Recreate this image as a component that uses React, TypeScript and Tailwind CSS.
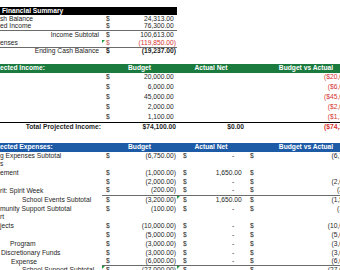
import React from "react";

type Amt = {
  v?: string;
  d?: boolean;
  bold?: boolean;
  red?: boolean;
  dRed?: boolean;
  tri?: boolean;
};

const COL_B = "w-[75px] pl-[4px] pr-[1px]";
const COL_C = "w-[68px] pl-[6px] pr-[1px]";
const COL_D = "w-[122px] pl-[5px] pr-[5px]";

function Tri() {
  return (
    <span className="absolute left-0 top-0 w-0 h-0 border-t-[3px] border-r-[3px] border-t-[#1f9a3c] border-r-transparent" />
  );
}

function Value({ v }: { v: string }) {
  if (v === "-") {
    return (
      <span>
        -<span className="invisible">00)</span>
      </span>
    );
  }
  if (v.endsWith(")") || v.startsWith("$")) return <span>{v}</span>;
  return (
    <span>
      {v}
      <span className="invisible">)</span>
    </span>
  );
}

function AmtCell({ col, a, line }: { col: string; a?: Amt; line?: boolean }) {
  return (
    <div
      className={`relative h-full flex items-center justify-between shrink-0 ${col} ${
        line ? "border-b border-[#6b6b6b]" : ""
      }`}
    >
      {a?.tri && <Tri />}
      <span className={`${a?.dRed || a?.red ? "text-[#c0504d]" : ""} ${a?.bold ? "font-bold" : ""}`}>
        {a?.d ? "$" : ""}
      </span>
      {a?.v && (
        <span className={`${a.red ? "text-[#d3312f]" : ""} ${a.bold ? "font-bold" : ""}`}>
          <Value v={a.v} />
        </span>
      )}
    </div>
  );
}

function Row({
  h,
  label,
  lc = "",
  b,
  c,
  d,
  sumLine,
  expLine,
}: {
  h: string;
  label?: string;
  lc?: string;
  b?: Amt;
  c?: Amt;
  d?: Amt;
  sumLine?: boolean;
  expLine?: boolean;
}) {
  return (
    <div className={`flex ${h}`}>
      <div
        className={`w-[102px] shrink-0 h-full flex items-center whitespace-nowrap overflow-hidden ${lc} ${
          sumLine ? "border-b border-[#6b6b6b]" : ""
        }`}
      >
        {label}
      </div>
      <AmtCell col={COL_B} a={b} line={sumLine || expLine} />
      <AmtCell col={COL_C} a={c} line={expLine} />
      <AmtCell col={COL_D} a={d} line={expLine} />
    </div>
  );
}

function Header({ label, bg, h }: { label: string; bg: string; h: string }) {
  return (
    <div className={`flex ${h} ${bg} text-white font-bold items-center`}>
      <div className="w-[102px] shrink-0 whitespace-nowrap">{label}</div>
      <div className="w-[75px] shrink-0 text-center">Budget</div>
      <div className="w-[68px] shrink-0 text-center">Actual Net</div>
      <div className="w-[122px] shrink-0 text-center">Budget vs Actual</div>
    </div>
  );
}

const dash: Amt = { d: true, v: "-" };

export default function App() {
  return (
    <div className="w-[340px] h-[270px] overflow-hidden bg-white">
      <div className="w-[367px] text-[6.7px] leading-none text-[#1e1e1e] font-['Liberation_Sans',Arial,sans-serif]">
        {/* financial summary */}
        <div className="h-[7px]" />
        <div className="flex h-[8px] items-center">
          <div className="w-[177px] h-full bg-black text-white font-bold flex items-center pl-[2px]">
            Financial Summary
          </div>
        </div>
        <Row h="h-[8.2px]" label="sh Balance" b={{ d: true, v: "24,313.00" }} />
        <Row h="h-[8.2px]" label="ed Income" b={{ d: true, v: "76,300.00" }} sumLine />
        <Row h="h-[8.2px]" label="Income Subtotal" lc="justify-end pr-[3px]" b={{ d: true, v: "100,613.00" }} />
        <Row
          h="h-[8.2px]"
          label="enses"
          b={{ d: true, v: "(119,850.00)", red: true, tri: true }}
          sumLine
        />
        <Row
          h="h-[8.2px]"
          label="Ending Cash Balance"
          lc="justify-end pr-[3px]"
          b={{ d: true, v: "(19,237.00)", bold: true }}
        />
        <div className="h-[8px]" />

        {/* projected income */}
        <Header label="ected Income:" bg="bg-[#1b7b3f]" h="h-[9px]" />
        <Row h="h-[9.8px]" b={{ d: true, v: "20,000.00" }} d={{ v: "($20,000.00)", red: true }} />
        <Row h="h-[9.8px]" b={{ d: true, v: "6,000.00" }} d={{ v: "($6,000.00)", red: true }} />
        <Row h="h-[9.8px]" b={{ d: true, v: "45,000.00" }} d={{ v: "($45,000.00)", red: true }} />
        <Row h="h-[9.8px]" b={{ d: true, v: "2,000.00" }} d={{ v: "($2,000.00)", red: true }} />
        <Row h="h-[9.8px]" b={{ d: true, v: "1,100.00" }} d={{ v: "($1,100.00)", red: true }} />
        <div className="h-[1.5px] bg-black" />
        <Row
          h="h-[8.8px]"
          label="Total Projected Income:"
          lc="justify-end pr-[1px] font-bold"
          b={{ v: "$74,100.00", bold: true }}
          c={{ v: "$0.00", bold: true }}
          d={{ v: "($74,100.00)", bold: true, red: true }}
        />
        <div className="h-[10.5px]" />

        {/* projected expenses */}
        <Header label="ected Expenses:" bg="bg-[#1e5ba7]" h="h-[8.8px]" />
        <Row
          h="h-[8.83px]"
          label="g Expenses Subtotal"
          b={{ d: true, v: "(6,750.00)" }}
          c={dash}
          d={{ d: true, v: "(6,750.00)" }}
        />
        <Row h="h-[8.83px]" label="s" />
        <Row
          h="h-[8.83px]"
          label="ement"
          b={{ d: true, v: "(1,000.00)" }}
          c={{ d: true, v: "1,650.00" }}
          d={{ d: true }}
        />
        <Row h="h-[8.83px]" b={{ d: true, v: "(2,000.00)" }} c={dash} d={{ d: true, v: "(2,000.00)" }} />
        <Row
          h="h-[8.83px]"
          label="rit: Spirit Week"
          b={{ d: true, v: "(200.00)" }}
          c={dash}
          d={{ d: true, v: "(200.00)" }}
          expLine
        />
        <Row
          h="h-[8.83px]"
          label="School Events Subtotal"
          lc="pl-[22px]"
          b={{ d: true, v: "(3,200.00)" }}
          c={{ d: true, v: "1,650.00", tri: true }}
          d={{ d: true, v: "(1,550.00)" }}
        />
        <Row
          h="h-[8.83px]"
          label="munity Support Subtotal"
          b={{ d: true, v: "(100.00)" }}
          c={dash}
          d={{ d: true, v: "(100.00)" }}
        />
        <Row h="h-[8.83px]" label="rt" />
        <Row h="h-[8.83px]" label="jects" b={{ d: true, v: "(10,000.00)" }} c={dash} d={{ d: true, v: "(10,000.00)" }} />
        <Row h="h-[8.83px]" b={{ d: true, v: "(5,000.00)" }} c={dash} d={{ d: true, v: "(5,000.00)" }} />
        <Row
          h="h-[8.83px]"
          label="Program"
          lc="pl-[10px]"
          b={{ d: true, v: "(3,000.00)" }}
          c={dash}
          d={{ d: true, v: "(3,000.00)" }}
        />
        <Row
          h="h-[8.83px]"
          label="Discretionary Funds"
          lc="pl-[1px]"
          b={{ d: true, v: "(3,000.00)" }}
          c={dash}
          d={{ d: true, v: "(3,000.00)" }}
        />
        <Row
          h="h-[8.83px]"
          label="Expense"
          lc="pl-[11px]"
          b={{ d: true, v: "(6,000.00)" }}
          c={dash}
          d={{ d: true, v: "(6,000.00)" }}
          expLine
        />
        <Row
          h="h-[8.83px]"
          label="School Support Subtotal"
          lc="pl-[22px]"
          b={{ d: true, v: "(27,000.00)", tri: true }}
          c={{ d: true, v: "-", tri: true }}
          d={{ d: true, v: "(27,000.00)" }}
        />
      </div>
    </div>
  );
}
